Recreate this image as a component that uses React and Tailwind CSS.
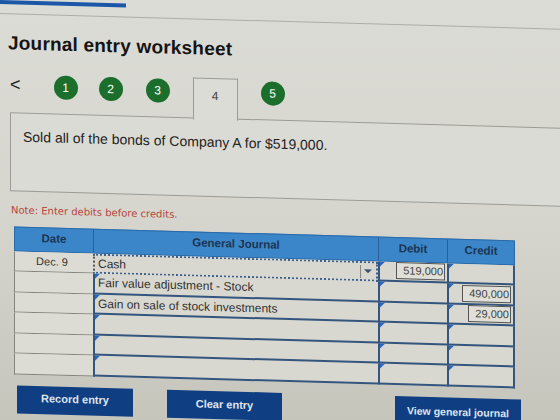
import React from "react";

const rows = [
  { date: "Dec. 9", account: "Cash", debit: "519,000", credit: "", active: true },
  { date: "", account: "Fair value adjustment - Stock", debit: "", credit: "490,000" },
  { date: "", account: "Gain on sale of stock investments", debit: "", credit: "29,000" },
  { date: "", account: "", debit: "", credit: "" },
  { date: "", account: "", debit: "", credit: "" },
  { date: "", account: "", debit: "", credit: "" },
];

function Flag() {
  return (
    <span className="absolute left-0 top-0 w-0 h-0 border-t-[5px] border-t-[#2a66c0] border-r-[5px] border-r-transparent" />
  );
}

function StepDot({ n }) {
  return (
    <div className="w-6 h-6 rounded-full bg-[#1c6e2c] text-white text-[12px] flex items-center justify-center">
      {n}
    </div>
  );
}

export default function App() {
  return (
    <div className="w-[560px] h-[420px] overflow-hidden bg-gradient-to-b from-[#dcdcd6] via-[#d6d6cf] to-[#c6c5bc] font-['Liberation_Sans',Arial,sans-serif] text-[#222]">
      <div className="origin-top-left skew-y-[1.6deg]">
        {/* tab strip */}
        <div className="h-[4px] w-[126px] bg-[#1b56a8]" />
        <div className="mt-[9px] border-t border-[#aeaea8]" />

        <h1 className="mt-[15px] ml-[8px] text-[19px] font-bold text-[#141414] tracking-[0.2px]">
          Journal entry worksheet
        </h1>

        {/* step navigation */}
        <div className="mt-[15px] flex items-start h-[40px]">
          <span className="ml-[10px] mt-[2px] text-[18px] leading-[18px] text-[#222]">&lt;</span>
          <div className="ml-[33px] mt-[1px]"><StepDot n="1" /></div>
          <div className="ml-[21px] mt-[1px]"><StepDot n="2" /></div>
          <div className="ml-[23px] mt-[1px]"><StepDot n="3" /></div>
          <div className="ml-[23px] -mt-[1px] w-[45px] h-[42px] border border-b-0 border-[#9c9c96] bg-[#dcdcd6] relative z-10 flex justify-center pt-[8px] text-[12px] text-[#444]">
            4
          </div>
          <div className="ml-[23px] mt-[1px]"><StepDot n="5" /></div>
        </div>

        {/* transaction text */}
        <div className="ml-[10px] -mt-[1px] h-[79px] border border-[#9c9c96] bg-[#dbdbd5] pl-[12px] pt-[13px] text-[14px] text-[#222] w-[560px]">
          Sold all of the bonds of Company A for $519,000.
        </div>

        <p className="mt-[11px] ml-[11px] text-[10px] text-[#b8443a] font-['DejaVu_Sans',Verdana,sans-serif]">
          Note: Enter debits before credits.
        </p>

        {/* journal grid */}
        <div className="mt-[9px] ml-[14px] w-[501px] text-[11px]">
          <div className="flex h-[25px] bg-[#3b86c9] text-[#1b3553] font-bold text-[11.5px] border border-[#2b6aa8]">
            <div className="w-[79px] flex items-center justify-center border-r border-[#2a5e95]">Date</div>
            <div className="w-[285px] flex items-center justify-center border-r border-[#2a5e95]">General Journal</div>
            <div className="w-[69px] flex items-center justify-center border-r border-[#2a5e95]">Debit</div>
            <div className="flex-1 flex items-center justify-center">Credit</div>
          </div>
          {rows.map((r, i) => (
            <div key={i} className="flex h-[20.5px] bg-[#d8d8d0]">
              <div className="w-[79px] bg-[#dcdcd5] border-l border-b border-[#85857f] flex items-center justify-center text-[#333]">
                {r.date && <span className="pr-[4px]">{r.date}</span>}
              </div>
              <div
                className={
                  r.active
                    ? "w-[285px] relative border-2 border-dotted border-[#3a5f8e] border-l-[#555] flex items-center pl-[3px] text-[#333]"
                    : "w-[285px] relative border-l-2 border-b-2 border-[#34557e] flex items-center pl-[3px] text-[#333]"
                }
              >
                {!r.active && <Flag />}
                <span className="text-[12px]">{r.account}</span>
                {r.active && (
                  <span className="absolute right-[2px] top-[2px] h-[13px] w-[14px] border-l border-[#888] flex items-center justify-center">
                    <span className="w-0 h-0 border-l-[4px] border-r-[4px] border-t-[4px] border-l-transparent border-r-transparent border-t-[#3a5070]" />
                  </span>
                )}
              </div>
              <div className="w-[69px] relative border-l-2 border-b-2 border-[#34557e] flex items-center justify-end pr-[2px] text-[#444]">
                <Flag />
                {r.debit && (
                  <span className="border border-[#555] bg-[#e0e0d8] pl-[6px] pr-[1px] leading-[15px]">{r.debit}</span>
                )}
              </div>
              <div className="flex-1 relative border-l-2 border-r-2 border-b-2 border-[#34557e] flex items-center justify-end pr-[2px] text-[#444]">
                <Flag />
                {r.credit && (
                  <span className="border border-[#555] bg-[#e0e0d8] pl-[6px] pr-[1px] leading-[15px]">{r.credit}</span>
                )}
              </div>
            </div>
          ))}
        </div>

        {/* actions */}
        <div className="mt-[11px] flex items-start">
          <button className="ml-[17px] w-[116px] h-[28px] bg-[#0f3f82] text-[#dfe5ee] text-[11px] font-bold pb-[3px]">
            Record entry
          </button>
          <button className="ml-[34px] w-[115px] h-[28px] bg-[#0f3f82] text-[#dfe5ee] text-[11px] font-bold">
            Clear entry
          </button>
          <button className="ml-[113px] w-[126px] h-[28px] bg-[#0f3f82] text-[#dfe5ee] text-[10.5px] font-bold pt-[2px]">
            View general journal
          </button>
        </div>
      </div>
    </div>
  );
}
